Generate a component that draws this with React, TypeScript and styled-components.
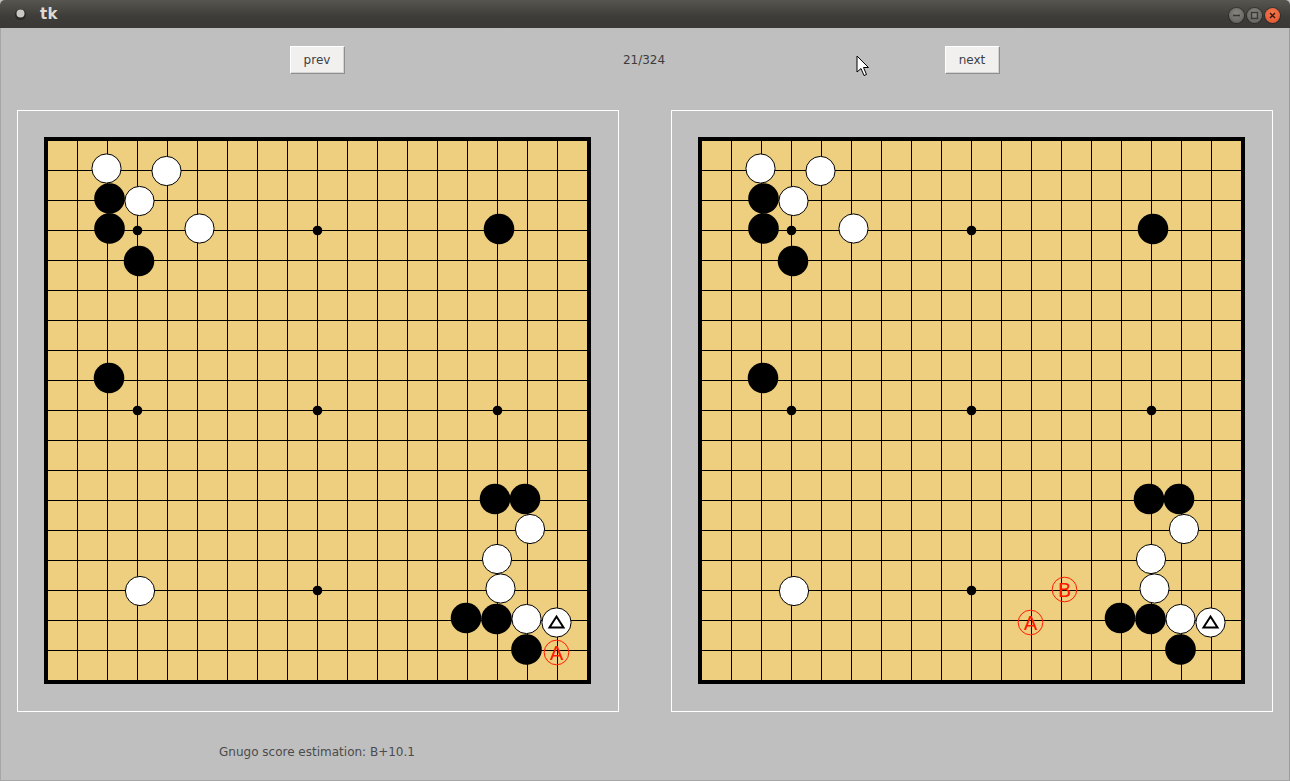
import React from "react";
import styled, { createGlobalStyle } from "styled-components";

const GlobalStyle = createGlobalStyle`
  html, body {
    margin: 0;
    padding: 0;
    background: #bfbfbf;
  }
  * {
    box-sizing: border-box;
  }
`;

const Window = styled.div`
  position: relative;
  width: 1290px;
  height: 781px;
  display: flex;
  flex-direction: column;
  overflow: hidden;
  font-family: "DejaVu Sans", "Liberation Sans", sans-serif;
`;

const TitleBar = styled.div`
  height: 28px;
  flex: none;
  display: flex;
  align-items: center;
  padding: 0 10px 0 14px;
  background: linear-gradient(#57554f, #3d3c38 60%, #3a3935);
  border-radius: 5px 5px 0 0;
`;

const TitleText = styled.span`
  margin-left: 13px;
  color: #dfdbd2;
  font-size: 15px;
  font-weight: bold;
  letter-spacing: 0.3px;
`;

const TitleButtons = styled.div`
  margin-left: auto;
  display: flex;
  gap: 3px;
  padding-top: 3px;
`;

const RoundBtn = styled.div<{ close?: boolean }>`
  width: 15px;
  height: 15px;
  border-radius: 50%;
  display: flex;
  align-items: center;
  justify-content: center;
  background: ${(p) =>
    p.close
      ? "radial-gradient(circle at 50% 35%, #f47a4f, #e0502a)"
      : "radial-gradient(circle at 50% 35%, #88867f, #5c5b57)"};
  box-shadow: 0 0 0 1px rgba(0, 0, 0, 0.25);
`;

const Content = styled.div`
  flex: 1;
  display: flex;
  flex-direction: column;
  background: #bfbfbf;
  border-left: 1px solid #a6a6a6;
  border-right: 1px solid #9c9c9c;
  border-bottom: 1px solid #a6a6a6;
  padding: 0 16px;
`;

const Toolbar = styled.div`
  display: grid;
  grid-template-columns: 600px 54px 602px;
  align-items: center;
  height: 82px;
  padding-top: 18px;
  padding-bottom: 36px;
`;

const NavButton = styled.button`
  justify-self: center;
  width: 55px;
  height: 28px;
  padding: 0;
  font-family: "DejaVu Sans", "Liberation Sans", sans-serif;
  font-size: 12px;
  color: #3b3f46;
  background: #f1f0ee;
  border: 1px solid;
  border-color: #ffffff #8e8e8e #8e8e8e #ffffff;
  box-shadow: inset -1px -1px 0 #d4d3d1;
`;

const Counter = styled.span`
  justify-self: center;
  white-space: nowrap;
  font-size: 12px;
  color: #3c3c3c;
`;

const Boards = styled.div`
  display: flex;
  gap: 52px;
`;

const Panel = styled.div`
  width: 602px;
  height: 602px;
  border: 1px solid #ffffff;
  display: flex;
  align-items: flex-start;
  padding: 26px 0 0 26px;
`;

const Status = styled.div`
  width: 600px;
  text-align: center;
  padding-top: 33px;
  font-size: 12px;
  line-height: 14px;
  color: #4b4b4b;
`;

const Cursor = styled.svg`
  position: absolute;
  left: 856px;
  top: 55px;
`;

type Stone = [color: "b" | "w", c: number, r: number, dx: number, dy: number];

const STONES: Stone[] = [
  ["w", 2, 1, -1, -2],
  ["w", 4, 1, -1, 0.5],
  ["b", 2, 2, 2, -2],
  ["w", 3, 2, 2, 0.5],
  ["b", 2, 3, 2, -2],
  ["w", 5, 3, 2, -2],
  ["b", 3, 4, 1.5, 0.5],
  ["b", 15, 3, 1.5, -1.5],
  ["b", 2, 8, 1.5, -2.5],
  ["b", 15, 12, -2.5, -1.5],
  ["b", 16, 12, -2.5, -1.5],
  ["w", 16, 13, 2.5, -1.5],
  ["w", 15, 14, -0.5, -1.5],
  ["w", 15, 15, 3, -2],
  ["w", 3, 15, 2.5, 0.5],
  ["b", 14, 16, -1.5, -2.5],
  ["b", 15, 16, -1, -1.5],
  ["w", 16, 16, -1, -1.5],
  ["w", 17, 16, -1, 2],
  ["b", 16, 17, -1, -1],
];

const LAST: [number, number] = [17, 16];

type Mark = { label: string; c: number; r: number; dx: number; dy: number };

const STARS = [3, 9, 15];
const pos = (i: number) => 3.5 + 30 * i;

function Board({ marks }: { marks: Mark[] }) {
  const lines = [];
  for (let i = 1; i < 18; i++) {
    lines.push(
      <line key={"v" + i} x1={pos(i)} y1={3} x2={pos(i)} y2={544} stroke="#000" strokeWidth={1} />,
      <line key={"h" + i} x1={3} y1={pos(i)} x2={544} y2={pos(i)} stroke="#000" strokeWidth={1} />
    );
  }
  return (
    <svg width={547} height={547} viewBox="0 0 547 547">
      <rect x={2} y={2} width={543} height={543} fill="#eecf7f" stroke="#000" strokeWidth={4} />
      {lines}
      {STARS.flatMap((c) =>
        STARS.map((r) => <circle key={`s${c}-${r}`} cx={pos(c)} cy={pos(r)} r={4.8} fill="#000" />)
      )}
      {STONES.map(([color, c, r, dx, dy], k) => {
        const x = pos(c) + dx;
        const y = pos(r) + dy;
        const last = c === LAST[0] && r === LAST[1];
        return (
          <g key={k}>
            {color === "b" ? (
              <circle cx={x} cy={y} r={15.3} fill="#000" />
            ) : (
              <circle cx={x} cy={y} r={14.6} fill="#fff" stroke="#000" strokeWidth={1} />
            )}
            {last && (
              <polygon
                points={`${x},${y - 6} ${x + 7},${y + 5} ${x - 7},${y + 5}`}
                fill="none"
                stroke="#000"
                strokeWidth={2}
              />
            )}
          </g>
        );
      })}
      {marks.map((m) => {
        const x = pos(m.c) + m.dx;
        const y = pos(m.r) + m.dy;
        return (
          <g key={m.label}>
            <circle cx={x} cy={y} r={12.3} fill="none" stroke="#ff1a00" strokeWidth={1} />
            <text
              x={x}
              y={y + 7.3}
              textAnchor="middle"
              fontFamily="'DejaVu Sans', sans-serif"
              fontSize={20}
              fill="#ff1a00"
            >
              {m.label}
            </text>
          </g>
        );
      })}
    </svg>
  );
}

export default function App() {
  return (
    <Window>
      <GlobalStyle />
      <TitleBar>
        <svg width={13} height={14} viewBox="0 0 13 14">
          <circle cx={6.5} cy={7.5} r={5.5} fill="#2a2926" />
          <circle cx={6.5} cy={6.5} r={4} fill="#c9c8c4" />
        </svg>
        <TitleText>tk</TitleText>
        <TitleButtons>
          <RoundBtn>
            <svg width={9} height={9} viewBox="0 0 9 9">
              <line x1={1} y1={4.5} x2={8} y2={4.5} stroke="#3a3935" strokeWidth={1.6} />
            </svg>
          </RoundBtn>
          <RoundBtn>
            <svg width={9} height={9} viewBox="0 0 9 9">
              <rect x={1.5} y={1.5} width={6} height={6} fill="none" stroke="#3a3935" strokeWidth={1.4} />
            </svg>
          </RoundBtn>
          <RoundBtn close>
            <svg width={9} height={9} viewBox="0 0 9 9">
              <path d="M2 2 L7 7 M7 2 L2 7" stroke="#3b1a10" strokeWidth={1.5} />
            </svg>
          </RoundBtn>
        </TitleButtons>
      </TitleBar>
      <Content>
        <Toolbar>
          <NavButton>prev</NavButton>
          <Counter>21/324</Counter>
          <NavButton>next</NavButton>
        </Toolbar>
        <Boards>
          <Panel>
            <Board marks={[{ label: "A", c: 17, r: 17, dx: -1, dy: 2 }]} />
          </Panel>
          <Panel>
            <Board
              marks={[
                { label: "A", c: 11, r: 16, dx: -1, dy: 2 },
                { label: "B", c: 12, r: 15, dx: 3, dy: -1 },
              ]}
            />
          </Panel>
        </Boards>
        <Status>Gnugo score estimation: B+10.1</Status>
      </Content>
      <Cursor width={14} height={23} viewBox="0 0 14 23">
        <path
          d="M1 1 L1 17 L5 13.5 L8 20.5 L10.5 19.5 L7.5 12.5 L12.5 12.5 Z"
          fill="#fff"
          stroke="#000"
          strokeWidth={1}
          strokeLinejoin="round"
        />
      </Cursor>
    </Window>
  );
}
